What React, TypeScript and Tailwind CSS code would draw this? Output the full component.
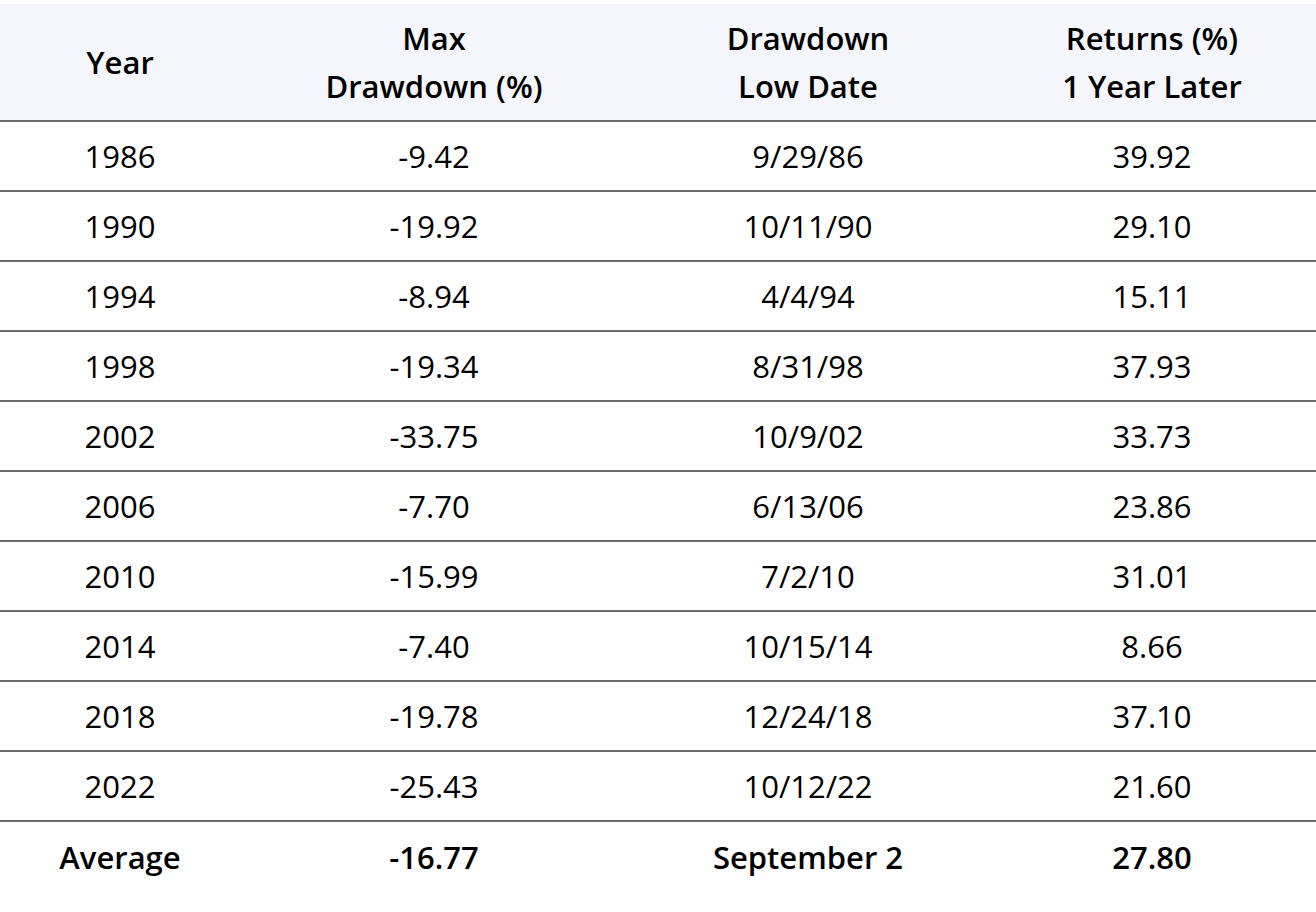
import React from 'react';

type Row = { year: string; drawdown: string; lowDate: string; returns: string };

const rows: Row[] = [
    { year: '1986', drawdown: '-9.42', lowDate: '9/29/86', returns: '39.92' },
    { year: '1990', drawdown: '-19.92', lowDate: '10/11/90', returns: '29.10' },
    { year: '1994', drawdown: '-8.94', lowDate: '4/4/94', returns: '15.11' },
    { year: '1998', drawdown: '-19.34', lowDate: '8/31/98', returns: '37.93' },
    { year: '2002', drawdown: '-33.75', lowDate: '10/9/02', returns: '33.73' },
    { year: '2006', drawdown: '-7.70', lowDate: '6/13/06', returns: '23.86' },
    { year: '2010', drawdown: '-15.99', lowDate: '7/2/10', returns: '31.01' },
    { year: '2014', drawdown: '-7.40', lowDate: '10/15/14', returns: '8.66' },
    { year: '2018', drawdown: '-19.78', lowDate: '12/24/18', returns: '37.10' },
    { year: '2022', drawdown: '-25.43', lowDate: '10/12/22', returns: '21.60' },
];

const App: React.FC = () => {
    const cell = 'h-[70px] p-0 text-center align-middle border-b-2 border-[#6b6b6b]';
    const head = 'h-[118px] p-0 font-semibold text-center align-middle border-b-2 border-[#6b6b6b]';
    return (
        <div className="w-[1316px] min-h-[912px] bg-white pt-[4px] text-[31px] leading-[48px] text-black font-['Open_Sans',sans-serif]">
            <table className="w-full table-fixed border-separate border-spacing-0">
                <colgroup>
                    <col className="w-[240px]" />
                    <col className="w-[388px]" />
                    <col className="w-[360px]" />
                    <col className="w-[328px]" />
                </colgroup>
                <thead>
                    <tr className="bg-[#f4f6fb]">
                        <th className={head}>Year</th>
                        <th className={head}>Max<br />Drawdown (%)</th>
                        <th className={head}>Drawdown<br />Low Date</th>
                        <th className={head}>Returns (%)<br />1 Year Later</th>
                    </tr>
                </thead>
                <tbody>
                    {rows.map((r) => (
                        <tr key={r.year}>
                            <td className={cell}>{r.year}</td>
                            <td className={cell}>{r.drawdown}</td>
                            <td className={cell}>{r.lowDate}</td>
                            <td className={cell}>{r.returns}</td>
                        </tr>
                    ))}
                    <tr className="font-semibold">
                        <td className="h-[70px] p-0 text-center align-middle">Average</td>
                        <td className="h-[70px] p-0 text-center align-middle">-16.77</td>
                        <td className="h-[70px] p-0 text-center align-middle">September 2</td>
                        <td className="h-[70px] p-0 text-center align-middle">27.80</td>
                    </tr>
                </tbody>
            </table>
        </div>
    );
};

export default App;
